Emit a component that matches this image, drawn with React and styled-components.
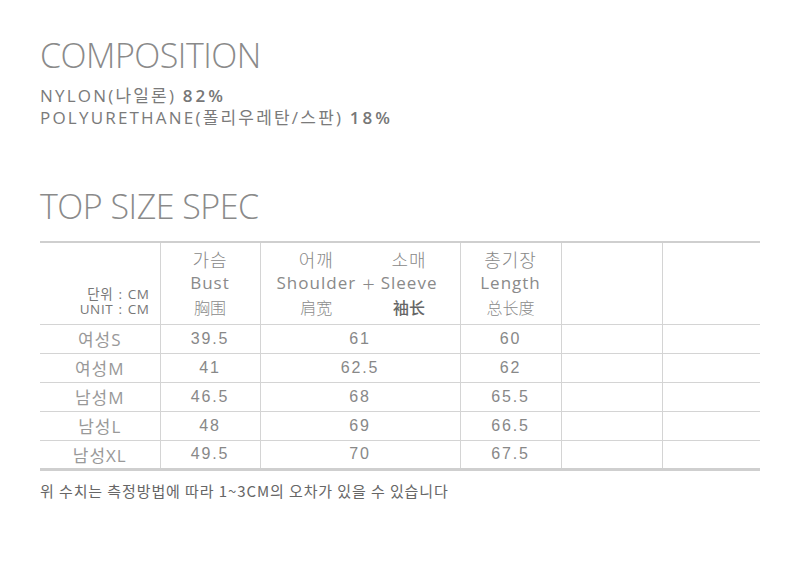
import styled, { createGlobalStyle } from 'styled-components'

const GlobalStyle = createGlobalStyle`
  html, body {
    margin: 0;
    padding: 0;
    background: #fff;
  }
  body {
    font-family: "Open Sans", "Noto Sans CJK KR", sans-serif;
    color: #777;
  }
`

const rows = [
  { label: '여성S', bust: '39.5', shoulder: '61', length: '60' },
  { label: '여성M', bust: '41', shoulder: '62.5', length: '62' },
  { label: '남성M', bust: '46.5', shoulder: '68', length: '65.5' },
  { label: '남성L', bust: '48', shoulder: '69', length: '66.5' },
  { label: '남성XL', bust: '49.5', shoulder: '70', length: '67.5' },
]

const App = () => {
  return (
    <>
      <GlobalStyle />
      <Page>
        <Title>COMPOSITION</Title>
        <Material>
          <Line>NYLON(나일론) <Percent>82%</Percent></Line>
          <Line>POLYURETHANE(폴리우레탄/스판) <Percent>18%</Percent></Line>
        </Material>

        <SpecTitle>TOP SIZE SPEC</SpecTitle>

        <Table>
          <colgroup>
            <col style={{ width: 120 }} />
            <col style={{ width: 100 }} />
            <col style={{ width: 200 }} />
            <col style={{ width: 101 }} />
            <col style={{ width: 101 }} />
            <col />
          </colgroup>
          <thead>
            <HeadRow>
              <UnitCell>
                <UnitLine>단위 : CM</UnitLine>
                <UnitLine>UNIT : CM</UnitLine>
              </UnitCell>
              <HeadCell>
                <Ko>가슴</Ko>
                <En>Bust</En>
                <Zh>胸围</Zh>
              </HeadCell>
              <HeadCell>
                <Pair>
                  <PairCol>
                    <Ko>어깨</Ko>
                    <En>Shoulder</En>
                    <Zh>肩宽</Zh>
                  </PairCol>
                  <Plus>+</Plus>
                  <PairCol>
                    <Ko>소매</Ko>
                    <En>Sleeve</En>
                    <Zh $dark>袖长</Zh>
                  </PairCol>
                </Pair>
              </HeadCell>
              <HeadCell>
                <Ko>총기장</Ko>
                <En>Length</En>
                <Zh>总长度</Zh>
              </HeadCell>
              <HeadCell />
              <HeadCell />
            </HeadRow>
          </thead>
          <tbody>
            {rows.map((r) => (
              <BodyRow key={r.label}>
                <LabelCell>{r.label}</LabelCell>
                <Cell>{r.bust}</Cell>
                <Cell>{r.shoulder}</Cell>
                <Cell>{r.length}</Cell>
                <Cell />
                <Cell />
              </BodyRow>
            ))}
          </tbody>
        </Table>

        <Note>위 수치는 측정방법에 따라 1~3CM의 오차가 있을 수 있습니다</Note>
      </Page>
    </>
  )
}

export default App

const Page = styled.div`
  width: 800px;
  height: 571px;
  padding: 35px 40px 0;
  box-sizing: border-box;
`

const Title = styled.h1`
  margin: 0;
  font-family: "Open Sans", sans-serif;
  font-weight: 300;
  font-size: 34px;
  line-height: 40px;
  letter-spacing: -0.5px;
  color: #8a8a8a;
`

const Material = styled.div`
  margin-top: 10px;
`

const Line = styled.div`
  font-family: "Open Sans", "Noto Sans CJK KR", sans-serif;
  font-size: 17px;
  line-height: 22px;
  letter-spacing: 2.2px;
  color: #7a7a7a;
`

const Percent = styled.span`
  font-weight: 600;
  color: #777;
  letter-spacing: 3px;
`

const SpecTitle = styled(Title)`
  margin-top: 57px;
`

const Table = styled.table`
  margin-top: 15px;
  width: 720px;
  border-collapse: collapse;
  table-layout: fixed;
  border-top: 2px solid #cfcfcf;
  border-bottom: 3px solid #cfcfcf;
`

const HeadRow = styled.tr`
  height: 82px;
`

const BodyRow = styled.tr`
  height: 29px;
`

const BaseCell = styled.td`
  border-left: 1px solid #d4d4d4;
  border-bottom: 1px solid #d4d4d4;
  text-align: center;
  padding: 0;
  &:first-child {
    border-left: none;
  }
`

const HeadCell = styled(BaseCell).attrs({ as: 'th' })`
  font-weight: 400;
  vertical-align: middle;
  color: #888;
`

const UnitCell = styled(HeadCell)`
  text-align: right;
  vertical-align: bottom;
  padding: 0 10px 7px 0;
  color: #777;
`

const UnitLine = styled.div`
  font-family: "Open Sans", "Noto Sans CJK KR", sans-serif;
  font-size: 13.5px;
  line-height: 15px;
  height: 15px;
  overflow: visible;
  letter-spacing: 0.6px;
  word-spacing: 1px;
`

const Ko = styled.div`
  font-family: "Noto Sans CJK KR", sans-serif;
  font-weight: 300;
  font-size: 18px;
  line-height: 23px;
  letter-spacing: 1px;
  color: #888;
`

const En = styled.div`
  font-family: "Open Sans", sans-serif;
  font-size: 17px;
  line-height: 24px;
  letter-spacing: 1px;
  color: #8a8a8a;
`

const Zh = styled.div`
  font-family: "Noto Sans CJK SC", sans-serif;
  font-size: 16px;
  line-height: 24px;
  color: ${(p) => (p.$dark ? '#666' : '#8a8a8a')};
  font-weight: ${(p) => (p.$dark ? 500 : 300)};
`

const Pair = styled.div`
  display: flex;
  justify-content: center;
  align-items: center;
  gap: 6px;
  margin-left: -6px;
`

const PairCol = styled.div`
  display: flex;
  flex-direction: column;
  align-items: center;
`

const Plus = styled.span`
  font-family: "Open Sans", sans-serif;
  font-size: 22px;
  color: #8a8a8a;
  font-weight: 300;
`

const Cell = styled(BaseCell)`
  font-family: "Liberation Sans", sans-serif;
  font-size: 16px;
  letter-spacing: 1.8px;
  color: #888;
`

const LabelCell = styled(Cell)`
  font-family: "Open Sans", "Noto Sans CJK KR", sans-serif;
  font-size: 17px;
  letter-spacing: 1px;
  color: #999;
`

const Note = styled.p`
  margin: 11px 0 0;
  font-family: "Noto Sans CJK KR", sans-serif;
  font-size: 15px;
  line-height: 18px;
  letter-spacing: 0.9px;
  color: #666;
`
